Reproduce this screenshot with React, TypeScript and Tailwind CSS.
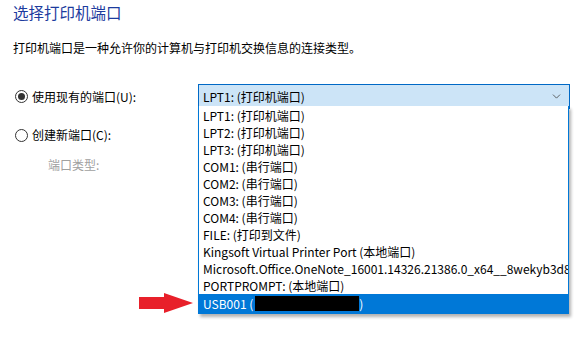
import { ChevronDown } from "lucide-react";

const FONT = "font-['Noto_Sans_CJK_SC','Noto_Sans',sans-serif]";

const PORTS = [
  "LPT1: (打印机端口)",
  "LPT2: (打印机端口)",
  "LPT3: (打印机端口)",
  "COM1: (串行端口)",
  "COM2: (串行端口)",
  "COM3: (串行端口)",
  "COM4: (串行端口)",
  "FILE: (打印到文件)",
  "Kingsoft Virtual Printer Port (本地端口)",
  "Microsoft.Office.OneNote_16001.14326.21386.0_x64__8wekyb3d8bbwe (本地端口)",
  "PORTPROMPT: (本地端口)",
];

function Radio({ checked }: { checked: boolean }) {
  return (
    <span className="flex h-[13px] w-[13px] items-center justify-center rounded-full border border-[#333333] bg-white">
      {checked && <span className="h-[7px] w-[7px] rounded-full bg-[#333333]" />}
    </span>
  );
}

export default function App() {
  return (
    <div className={`relative h-[352px] w-[581px] overflow-hidden bg-white text-[12px] text-black ${FONT}`}>
      <div className="flex flex-col pl-[13px]">
        <h1 className="mt-[1px] text-[15.5px] leading-[22px] text-[#1c3b9e]">选择打印机端口</h1>
        <p className="mt-[16px] leading-[18px]">打印机端口是一种允许你的计算机与打印机交换信息的连接类型。</p>

        <div className="mt-[27px] flex items-center">
          <label className="flex w-[185px] items-center gap-[4px] pl-[2px]">
            <Radio checked />
            <span className="leading-[18px]">使用现有的端口(U):</span>
          </label>
          <div className="flex h-[25px] w-[372px] items-center justify-between border border-[#0069c6] bg-[#cce4f7] pl-[4px] pr-[6px]">
            <span className="leading-[18px]">LPT1: (打印机端口)</span>
            <ChevronDown size={13} strokeWidth={1.5} className="text-[#444444]" />
          </div>
        </div>

        <label className="mt-[17px] flex items-center gap-[4px] pl-[2px]">
          <Radio checked={false} />
          <span className="leading-[18px]">创建新端口(C):</span>
        </label>

        <p className="mt-[12px] pl-[35px] leading-[18px] text-[#a0a0a0]">端口类型:</p>
      </div>

      {/* 展开的下拉列表，盖在表单上面 */}
      <ul className="absolute left-[198px] top-[106px] flex w-[371px] flex-col overflow-hidden border border-t-0 border-[#0078d7] bg-white pt-[1px] shadow-[2px_3px_3px_rgba(0,0,0,0.3)]">
        {PORTS.map((port) => (
          <li key={port} className="h-[17px] overflow-hidden whitespace-nowrap pl-[4px] leading-[17px]">
            {port}
          </li>
        ))}
        <li className="flex h-[19px] items-center bg-[#0078d7] pl-[4px] text-white">
          <span>USB001 (</span>
          <span className="ml-[2px] h-[15px] w-[104px] bg-black" />
          <span>)</span>
        </li>
      </ul>

      <svg className="absolute left-[139px] top-[293px]" width="54" height="20" viewBox="0 0 54 20">
        <path d="M0 4 H25 V0 L54 10 L25 20 V16 H0 Z" fill="#e8202a" />
      </svg>
    </div>
  );
}
